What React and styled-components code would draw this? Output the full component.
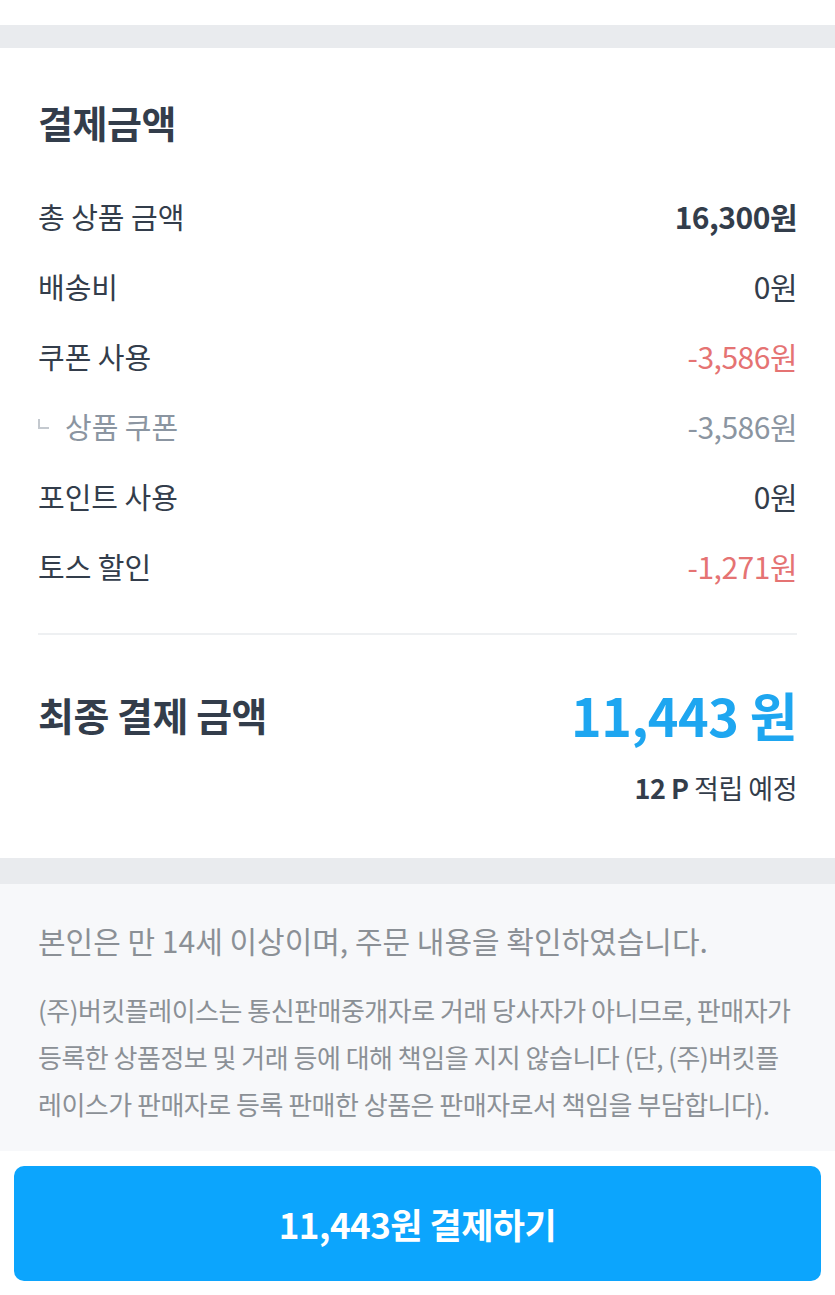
import React from "react";
import styled, { createGlobalStyle } from "styled-components";

const Global = createGlobalStyle`
  html, body { margin: 0; padding: 0; background: #ffffff; }
  body { font-family: "Noto Sans CJK KR", "Noto Sans", sans-serif; -webkit-font-smoothing: antialiased; }
  * { box-sizing: border-box; }
`;

const Page = styled.div`
  width: 835px;
  display: flex;
  flex-direction: column;
  background: #ffffff;
`;

const TopSpacer = styled.div`
  height: 25px;
  background: #ffffff;
`;

const Band = styled.div`
  height: ${(p) => p.$h}px;
  background: #e9ebee;
`;

const Section = styled.section`
  padding: 46px 38px 51px 38px;
  display: flex;
  flex-direction: column;
`;

const Title = styled.h2`
  margin: 0 0 31px 0;
  font-size: 38px;
  font-weight: 700;
  color: #333d4b;
  line-height: 56px;
  letter-spacing: -0.5px;
`;

const Row = styled.div`
  display: flex;
  justify-content: space-between;
  align-items: center;
  height: 70px;
`;

const Label = styled.span`
  font-size: 29px;
  font-weight: 400;
  color: ${(p) => (p.$sub ? "#8b95a1" : "#333d4b")};
  display: flex;
  align-items: center;
  letter-spacing: 0;
`;

const SubMark = styled.span`
  display: inline-block;
  width: 11px;
  height: 10px;
  border-left: 2px solid #c4c9cf;
  border-bottom: 2px solid #c4c9cf;
  margin: 0 16px 0 0;
  transform: translateY(-2px);
`;

const Value = styled.span`
  font-size: 30px;
  font-weight: ${(p) => (p.$bold ? 700 : 400)};
  color: ${(p) =>
    p.$tone === "red" ? "#e57373" : p.$tone === "gray" ? "#8b95a1" : "#333d4b"};
  letter-spacing: -0.5px;
`;

const Divider = styled.hr`
  border: none;
  height: 2px;
  background: #eef0f2;
  margin: 32px 0 39px 0;
`;

const TotalRow = styled.div`
  display: flex;
  justify-content: space-between;
  align-items: center;
  height: 80px;
`;

const TotalLabel = styled.span`
  font-size: 39px;
  font-weight: 700;
  color: #333d4b;
  letter-spacing: -0.5px;
`;

const TotalValue = styled.span`
  font-size: 52px;
  font-weight: 700;
  color: #1ea6f0;
  letter-spacing: -0.5px;
`;

const PointNote = styled.div`
  align-self: flex-end;
  margin-top: 14px;
  font-size: 27px;
  color: #333d4b;
  letter-spacing: -0.5px;
  b { font-weight: 700; }
`;

const Notice = styled.section`
  background: #f7f8fa;
  padding: 34px 38px 24px 38px;
  display: flex;
  flex-direction: column;
  gap: 24px;
`;

const NoticeMain = styled.p`
  margin: 0;
  font-size: 30px;
  line-height: 44px;
  color: #8b9096;
  letter-spacing: 0;
`;

const NoticeFine = styled.p`
  margin: 0;
  font-size: 26px;
  line-height: 47px;
  color: #8b9096;
  letter-spacing: -0.5px;
  word-break: break-all;
`;

const ButtonWrap = styled.div`
  padding: 15px 14px 14px 14px;
`;

const PayButton = styled.button`
  width: 100%;
  height: 115px;
  border: none;
  border-radius: 10px;
  background: #0ca5fd;
  color: #ffffff;
  font-family: inherit;
  font-size: 35px;
  font-weight: 700;
  letter-spacing: -0.5px;
`;

const rows = [
  { label: "총 상품 금액", value: "16,300원", bold: true },
  { label: "배송비", value: "0원" },
  { label: "쿠폰 사용", value: "-3,586원", tone: "red" },
  { label: "상품 쿠폰", value: "-3,586원", tone: "gray", sub: true },
  { label: "포인트 사용", value: "0원" },
  { label: "토스 할인", value: "-1,271원", tone: "red" },
];

export default function App() {
  return (
    <Page>
      <Global />
      <TopSpacer />
      <Band $h={23} />
      <Section>
        <Title>결제금액</Title>
        {rows.map((r) => (
          <Row key={r.label}>
            <Label $sub={r.sub}>
              {r.sub && <SubMark />}
              {r.label}
            </Label>
            <Value $bold={r.bold} $tone={r.tone}>
              {r.value}
            </Value>
          </Row>
        ))}
        <Divider />
        <TotalRow>
          <TotalLabel>최종 결제 금액</TotalLabel>
          <TotalValue>11,443 원</TotalValue>
        </TotalRow>
        <PointNote>
          <b>12 P</b> 적립 예정
        </PointNote>
      </Section>
      <Band $h={26} />
      <Notice>
        <NoticeMain>본인은 만 14세 이상이며, 주문 내용을 확인하였습니다.</NoticeMain>
        <NoticeFine>
          (주)버킷플레이스는 통신판매중개자로 거래 당사자가 아니므로, 판매자가 등록한 상품정보 및 거래 등에 대해 책임을 지지 않습니다 (단, (주)버킷플레이스가 판매자로 등록 판매한 상품은 판매자로서 책임을 부담합니다).
        </NoticeFine>
      </Notice>
      <ButtonWrap>
        <PayButton>11,443원 결제하기</PayButton>
      </ButtonWrap>
    </Page>
  );
}
